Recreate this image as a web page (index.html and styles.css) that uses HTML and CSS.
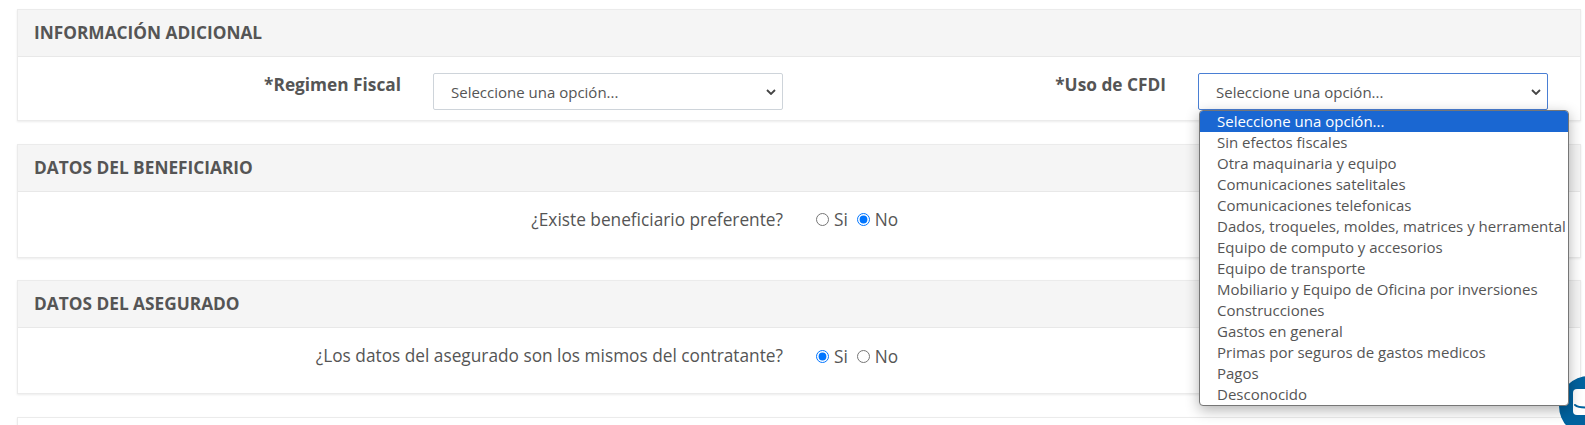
FILE: index.html
```html
<!DOCTYPE html>
<html lang="es">
<head>
    <meta charset="UTF-8">
    <meta name="viewport" content="width=device-width, initial-scale=1.0">
    <title>Información adicional</title>
    <link rel="stylesheet" href="styles.css">
</head>
<body>
    <div class="page">
        <!-- Informacion adicional -->
        <section class="card">
            <h2 class="card-title">INFORMACIÓN ADICIONAL</h2>
            <div class="card-body fiscal-row">
                <label class="field-label label-regimen">*Regimen Fiscal</label>
                <select class="field-select">
                    <option>Seleccione una opción...</option>
                </select>
                <label class="field-label label-cfdi">*Uso de CFDI</label>
                <div class="select-wrap">
                    <select class="field-select is-open">
                        <option>Seleccione una opción...</option>
                    </select>
                    <ul class="option-list">
                        <li class="selected">Seleccione una opción...</li>
                        <li>Sin efectos fiscales</li>
                        <li>Otra maquinaria y equipo</li>
                        <li>Comunicaciones satelitales</li>
                        <li>Comunicaciones telefonicas</li>
                        <li>Dados, troqueles, moldes, matrices y herramental</li>
                        <li>Equipo de computo y accesorios</li>
                        <li>Equipo de transporte</li>
                        <li>Mobiliario y Equipo de Oficina por inversiones</li>
                        <li>Construcciones</li>
                        <li>Gastos en general</li>
                        <li>Primas por seguros de gastos medicos</li>
                        <li>Pagos</li>
                        <li>Desconocido</li>
                    </ul>
                </div>
            </div>
        </section>

        <!-- Beneficiario -->
        <section class="card">
            <h2 class="card-title">DATOS DEL BENEFICIARIO</h2>
            <div class="card-body question-row">
                <span class="question">¿Existe beneficiario preferente?</span>
                <div class="radios">
                    <input type="radio" name="beneficiario" id="ben-si">
                    <label for="ben-si">Si</label>
                    <input type="radio" name="beneficiario" id="ben-no" checked>
                    <label for="ben-no">No</label>
                </div>
            </div>
        </section>

        <!-- Asegurado -->
        <section class="card">
            <h2 class="card-title">DATOS DEL ASEGURADO</h2>
            <div class="card-body question-row">
                <span class="question">¿Los datos del asegurado son los mismos del contratante?</span>
                <div class="radios">
                    <input type="radio" name="asegurado" id="ase-si" checked>
                    <label for="ase-si">Si</label>
                    <input type="radio" name="asegurado" id="ase-no">
                    <label for="ase-no">No</label>
                </div>
            </div>
        </section>

        <section class="card card-cut"></section>
    </div>

    <!-- Chat bubble -->
    <div class="chat-bubble">
        <svg class="chat-icon" width="30" height="30" viewBox="0 0 30 30">
            <rect x="2" y="2" width="26" height="26" rx="4" fill="#fff"/>
            <path d="M4 18c3 2.5 8 3 17 2" fill="none" stroke="#00629e" stroke-width="2" stroke-linecap="round"/>
        </svg>
    </div>
</body>
</html>
```

FILE: styles.css
```css
html, body {
    height: 100%;
    overflow: hidden;
}

body {
    margin: 0;
    font-family: "Open Sans", sans-serif;
    color: #555;
    background: #fff;
}

.page {
    padding: 9px 4px 0 17px;
    display: flex;
    flex-direction: column;
    gap: 22.5px;
}

.card {
    background: #fff;
    border: 1px solid #ebebeb;
    box-shadow: 0 1px 2px rgba(0, 0, 0, 0.08);
}

.card-title {
    margin: 0;
    height: 47px;
    line-height: 45px;
    padding: 0 16px;
    font-size: 17.28px;
    font-weight: 700;
    color: #555;
    background: #f5f5f5;
    border-bottom: 1px solid #e8e8e8;
    box-sizing: border-box;
}

.card-body {
    box-sizing: border-box;
}

/* Fila de regimen y CFDI */
.fiscal-row {
    display: flex;
    align-items: flex-start;
    height: 63px;
    padding-top: 16px;
}

.field-label {
    font-size: 17.28px;
    font-weight: 700;
    text-align: right;
    line-height: 24px;
}

.label-regimen {
    width: 383px;
    margin-right: 32px;
}

.label-cfdi {
    width: 367px;
    margin-left: 16px;
    margin-right: 32px;
}

.field-select {
    appearance: none;
    width: 350px;
    height: 37px;
    padding: 0 17px;
    font-family: "Open Sans", sans-serif;
    font-size: 15px;
    color: #555;
    background: #fff url("data:image/svg+xml,%3Csvg xmlns='http://www.w3.org/2000/svg' width='10' height='6' viewBox='0 0 10 6'%3E%3Cpath d='M1 1l4 4 4-4' fill='none' stroke='%23444' stroke-width='1.8'/%3E%3C/svg%3E") no-repeat right 6px center;
    border: 1px solid #ced4da;
    border-radius: 2px;
    outline: none;
}

.field-select.is-open {
    border-color: #4a7fd4;
}

.select-wrap {
    position: relative;
    width: 350px;
}

.option-list {
    position: absolute;
    top: 37px;
    left: 1px;
    width: 370px;
    margin: 0;
    padding: 0;
    list-style: none;
    background: #fff;
    border-radius: 4px;
    overflow: hidden;
    box-sizing: border-box;
    border: 1px solid #767676;
    box-shadow: 0 4px 14px rgba(0, 0, 0, 0.3);
    font-size: 15px;
    line-height: 21px;
    z-index: 5;
}

.option-list li {
    padding-left: 17px;
    white-space: nowrap;
}

.option-list li.selected {
    background: #1a67d2;
    color: #fff;
}

/* Preguntas con radios */
.question-row {
    display: flex;
    align-items: flex-start;
    height: 65px;
    padding-top: 16px;
}

.question {
    width: 765px;
    text-align: right;
    font-size: 17.28px;
    line-height: 24px;
}

.radios {
    display: flex;
    align-items: center;
    height: 24px;
    margin-left: 33px;
    font-size: 17.28px;
}

.radios input {
    margin: 0 5px 0 0;
}

.radios label {
    margin-right: 9px;
}

.card-cut {
    height: 40px;
}

.chat-bubble {
    position: absolute;
    left: 1559px;
    top: 376px;
    width: 60px;
    height: 60px;
    border-radius: 50%;
    background: #00629e;
}

.chat-icon {
    position: absolute;
    left: 12px;
    top: 11px;
}
```
